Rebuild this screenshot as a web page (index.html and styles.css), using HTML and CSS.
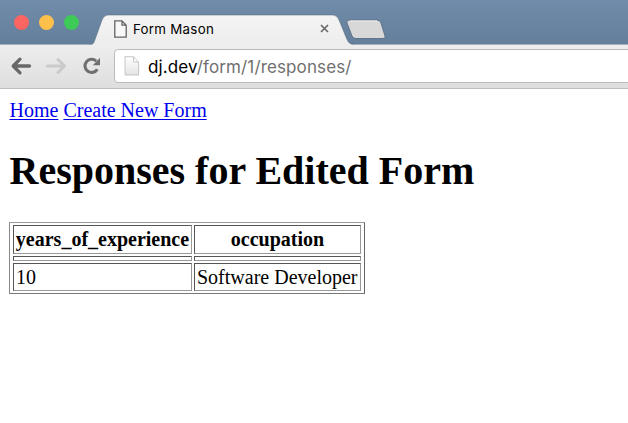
FILE: index.html
```html
<!DOCTYPE html>
<html lang="en">
<head>
<meta charset="utf-8">
<title>Form Mason</title>
<link rel="stylesheet" href="styles.css">
</head>
<body>
<header class="browser">
  <div class="tabstrip">
    <div class="lights"><i class="red"></i><i class="yellow"></i><i class="green"></i></div>
    <div class="tab">
      <svg class="tab-shape" width="274" height="31" viewBox="0 0 274 31">
        <defs><linearGradient id="tg" x2="0" y2="1"><stop stop-color="#f4f4f4"/><stop offset="1" stop-color="#ededed"/></linearGradient></defs>
        <path d="M0 30.5C4 30.5 4 28 5 25.5L12 6Q14 1 18 1H243Q247 1 249 6L257 25.5Q259 30.5 264 30.5V31H0Z" fill="url(#tg)"/>
        <path d="M0 30.5C4 30.5 4 28 5 25.5L12 6Q14 1 18 1H243Q247 1 249 6L257 25.5Q259 30.5 264 30.5" fill="none" stroke="#52677e" stroke-opacity=".65" stroke-width=".8"/>
      </svg>
      <svg class="favicon" width="13" height="18" viewBox="0 0 13 18"><path d="M.8.8H8L12.2 5.2V17.2H.8ZM8 .8V5.2H12.2" fill="#f8f8f8" stroke="#636363" stroke-width="1.3"/></svg>
      <span class="tab-title">Form Mason</span>
      <svg class="close" width="9" height="9" viewBox="0 0 9 9"><path d="M1 1L8 8M8 1L1 8" stroke="#666" stroke-width="1.6"/></svg>
    </div>
    <svg class="newtab" width="40" height="21" viewBox="0 0 40 21"><path d="M3 1H31Q34 1 35 4L39 17Q40 19.5 37 19.5H10Q7 19.5 6 17L1 4Q0 1 3 1Z" fill="#d8d8d8" stroke="#5f7389"/><path d="M4 2H31" stroke="#eee"/></svg>
  </div>
  <div class="toolbar">
    <svg class="nav" width="101" height="20" viewBox="0 0 101 20" fill="none" stroke-width="3.3">
      <path d="M19.5 10H4M10 3.2L3.2 10L10 16.8" stroke="#686868" stroke-linecap="round" stroke-linejoin="round"/>
      <path d="M37.5 10H53M48 3.5L54.5 10L48 16.5" stroke="#cacaca" stroke-width="3" stroke-linecap="round" stroke-linejoin="round"/>
      <path d="M86.2 5.2A6.6 6.6 0 1 0 87.3 13.2" stroke="#707070" stroke-width="3.1"/>
      <path d="M90 1.8V9.2H82.8Z" fill="#707070"/>
    </svg>
    <div class="omnibox">
      <svg width="16" height="20" viewBox="0 0 16 20"><defs><linearGradient id="pg" x2="0" y2="1"><stop stop-color="#fff"/><stop offset="1" stop-color="#e4e4e4"/></linearGradient></defs><path d="M1 .7H9.5L14.6 6V19H1ZM9.5 .7V6H14.6" fill="url(#pg)" stroke="#c5c5c5"/></svg>
      <span class="url"><b>dj.dev</b>/form/1/responses/</span>
    </div>
  </div>
</header>
<main>
  <nav class="links"><a href="#">Home</a> <a href="#">Create New Form</a></nav>
  <h1>Responses for Edited Form</h1>
  <table>
    <tr class="head"><th>years_of_experience</th><th>occupation</th></tr>
    <tr class="empty"><td></td><td></td></tr>
    <tr class="data"><td>10</td><td>Software Developer</td></tr>
  </table>
</main>
</body>
</html>
```
FILE: styles.css
```css
* { box-sizing: border-box; }
body { margin: 0; background: #fff; color: #000; overflow: hidden; font: 20px/24px "Liberation Serif", serif; }
svg { display: block; flex: none; }
.browser { font-family: Inter, sans-serif; }
.tabstrip { height: 44px; display: flex; align-items: flex-start; background: linear-gradient(#718caa, #637f9b); }
.lights { display: flex; gap: 10px; padding: 15px 0 0 14px; width: 90px; flex: none; }
.lights i { width: 15px; height: 15px; border-radius: 50%; }
.red { background: #fc6561; }
.yellow { background: #fdc04b; }
.green { background: #3dca56; }
.tab { position: relative; width: 256px; height: 31px; margin-top: 14px; display: flex; align-items: center; padding: 0 17px 2px 24px; z-index: 1; }
.tab-shape { position: absolute; left: 0; top: 0; }
.favicon, .tab-title, .close { position: relative; }
.tab-title { margin-left: 6px; font-size: 13.3px; line-height: 18px; letter-spacing: .28px; }
.close { margin-left: auto; }
.newtab { margin-top: 19px; }
.toolbar { height: 45px; display: flex; align-items: flex-start; background: linear-gradient(#eee, #dedede); border-top: 1px solid #a5afb7; border-bottom: 1px solid #bcbcbc; padding: 4px 0 0 10px; }
.nav { margin-top: 7px; }
.omnibox { flex: 1; height: 34px; margin: 0 -10px 0 3px; border: 1px solid #bbb; border-radius: 4px; background: #fff; display: flex; align-items: center; padding-left: 9px; }
.url { margin-left: 8px; padding-top: 1px; font-size: 17px; line-height: 24px; letter-spacing: .13px; color: #707070; }
.url b { font-weight: 400; color: #000; }
main { padding: 9px 9px; }
.links { padding-left: .5px; }
a { color: #00e; text-underline-offset: 2px; text-decoration-thickness: 1px; }
h1 { margin: 25px 0 27px; padding-left: .5px; font-size: 40px; line-height: 48px; }
table { width: 356px; border: 1px solid; border-color: #999 #666 #777 #888; border-spacing: 2px; table-layout: fixed; padding: 0 1px 0 1px; }
th, td { border: 1px solid; border-color: #555 #999 #999 #555; padding: 2px; line-height: 23px; white-space: nowrap; }
th { padding: 2px 1px; }
.data td { padding: 2px 2px 1px; }
th:first-child { width: 179px; }
.empty td { height: 5px; padding: 0; }
```
